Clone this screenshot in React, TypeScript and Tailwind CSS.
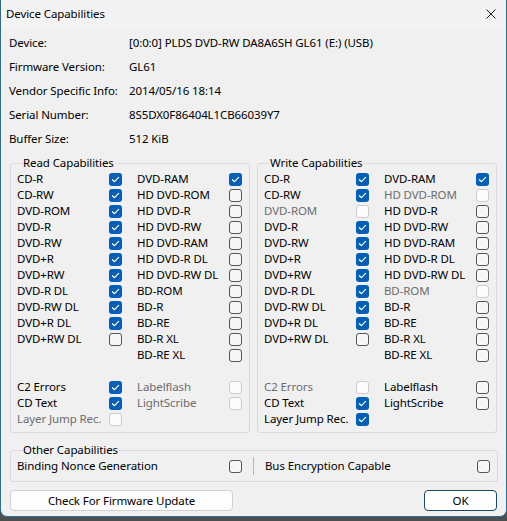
import React from "react"

type Cap = { name: string, on?: boolean, off?: boolean }
type Row = [Cap | null, Cap | null]

const font = { fontFamily: '"Noto Sans", "Open Sans", sans-serif' }

const info: [string, string][] = [
  ["Device:", "[0:0:0] PLDS DVD-RW DA8A6SH GL61 (E:) (USB)"],
  ["Firmware Version:", "GL61"],
  ["Vendor Specific Info:", "2014/05/16 18:14"],
  ["Serial Number:", "8S5DX0F86404L1CB66039Y7"],
  ["Buffer Size:", "512 KiB"],
]

const c = (name: string, on?: boolean, off?: boolean): Cap => ({ name, on, off })

const readRows: (Row | null)[] = [
  [c("CD-R", true), c("DVD-RAM", true)],
  [c("CD-RW", true), c("HD DVD-ROM")],
  [c("DVD-ROM", true), c("HD DVD-R")],
  [c("DVD-R", true), c("HD DVD-RW")],
  [c("DVD-RW", true), c("HD DVD-RAM")],
  [c("DVD+R", true), c("HD DVD-R DL")],
  [c("DVD+RW", true), c("HD DVD-RW DL")],
  [c("DVD-R DL", true), c("BD-ROM")],
  [c("DVD-RW DL", true), c("BD-R")],
  [c("DVD+R DL", true), c("BD-RE")],
  [c("DVD+RW DL"), c("BD-R XL")],
  [null, c("BD-RE XL")],
  null,
  [c("C2 Errors", true), c("Labelflash", false, true)],
  [c("CD Text", true), c("LightScribe", false, true)],
  [c("Layer Jump Rec.", false, true), null],
]

const writeRows: (Row | null)[] = [
  [c("CD-R", true), c("DVD-RAM", true)],
  [c("CD-RW", true), c("HD DVD-ROM", false, true)],
  [c("DVD-ROM", false, true), c("HD DVD-R")],
  [c("DVD-R", true), c("HD DVD-RW")],
  [c("DVD-RW", true), c("HD DVD-RAM")],
  [c("DVD+R", true), c("HD DVD-R DL")],
  [c("DVD+RW", true), c("HD DVD-RW DL")],
  [c("DVD-R DL", true), c("BD-ROM", false, true)],
  [c("DVD-RW DL", true), c("BD-R")],
  [c("DVD+R DL", true), c("BD-RE")],
  [c("DVD+RW DL"), c("BD-R XL")],
  [null, c("BD-RE XL")],
  null,
  [c("C2 Errors", false, true), c("Labelflash")],
  [c("CD Text", true), c("LightScribe")],
  [c("Layer Jump Rec.", true), null],
]

const Check = (props: { on?: boolean, off?: boolean }) => {
  const { on, off } = props
  if (on) return <div className="w-[13px] h-[13px] shrink-0 rounded-[3px] bg-[#005fb8] flex items-center justify-center">
    <svg width="13" height="13" viewBox="0 0 13 13" fill="none">
      <path d="M3.4 6.7 L5.5 8.7 L9.6 4.4" stroke="white" strokeWidth="1.2" strokeLinecap="round" strokeLinejoin="round" />
    </svg>
  </div>
  return <div className={off
    ? "w-[13px] h-[13px] shrink-0 rounded-[3px] border border-[#cdcdcd] bg-[#fbfbfb]"
    : "w-[13px] h-[13px] shrink-0 rounded-[3px] border border-[#545454] bg-[#f7f7f7]"} />
}

const Cell = (props: { cap: Cap | null }) => {
  const { cap } = props
  if (!cap) return <div className="w-[105px]" />
  return <div className="w-[105px] flex items-center">
    <div className={"w-[92px] whitespace-nowrap " + (cap.off ? "text-[#6d6d6d]" : "text-black")}
      children={cap.name} />
    <Check on={cap.on} off={cap.off} />
  </div>
}

const Group = (props: { title: string, rows: (Row | null)[] }) => {
  const { title, rows } = props
  return <fieldset className="w-[240px] border border-[#dadada] rounded-[3px] pl-[6px] pb-[5px]">
    <legend className="ml-[6px] leading-[16px] pr-px">{title}</legend>
    {rows.map((row, i) => <div key={i} className="h-[16px] flex items-center gap-[15px]">
      {row && <>
        <Cell cap={row[0]} />
        <Cell cap={row[1]} />
      </>}
    </div>)}
  </fieldset>
}

export default function App() {
  return <div className="w-[507px] h-[521px] bg-[#4b4f52] flex flex-col text-[11.5px] tracking-[-0.1px] text-black" style={font}>
    <div className="h-[517px] flex flex-col bg-[#f0f0f0] border-x border-b border-[#2f6b8c] rounded-b-[7px] overflow-hidden">
      <div className="h-[28px] shrink-0 flex items-center justify-between pl-[5px] pr-[10px] bg-[#f3f3f3]">
        <span>Device Capabilities</span>
        <svg width="10" height="10" viewBox="0 0 10 10">
          <path d="M0.5 0.5 L9.5 9.5 M9.5 0.5 L0.5 9.5" stroke="#1a1a1a" strokeWidth="1" />
        </svg>
      </div>

      <div className="mt-[3px] pl-[8px]">
        {info.map(([k, v]) => <div key={k} className="h-[24px] flex items-center">
          <div className="w-[120px]" children={k} />
          <div children={v} />
        </div>)}
      </div>

      <div className="mt-[4px] pl-[9px] flex gap-[7px]">
        <Group title="Read Capabilities" rows={readRows} />
        <Group title="Write Capabilities" rows={writeRows} />
      </div>

      <fieldset className="mt-[9px] ml-[9px] w-[488px] border border-[#dadada] rounded-[3px] pl-[6px] pb-[7px]">
        <legend className="ml-[6px] leading-[16px] pr-px">Other Capabilities</legend>
        <div className="h-[16px] flex items-center">
          <div className="w-[212px] whitespace-nowrap">Binding Nonce Generation</div>
          <Check />
          <div className="mx-[11px] w-px h-[18px] bg-[#b8b8b8]" />
          <div className="w-[212px] whitespace-nowrap">Bus Encryption Capable</div>
          <Check />
        </div>
      </fieldset>

      <div className="mt-[8px] pl-[9px] pr-[9px] flex justify-between">
        <button className="w-[223px] h-[21px] rounded-[4px] border border-[#d0d0d0] bg-[#fdfdfd] flex items-center justify-center"
          children="Check For Firmware Update" />
        <button className="w-[73px] h-[21px] rounded-[4px] border border-[#1c4867] bg-[#fdfdfd] flex items-center justify-center"
          children="OK" />
      </div>
    </div>
  </div>
}
